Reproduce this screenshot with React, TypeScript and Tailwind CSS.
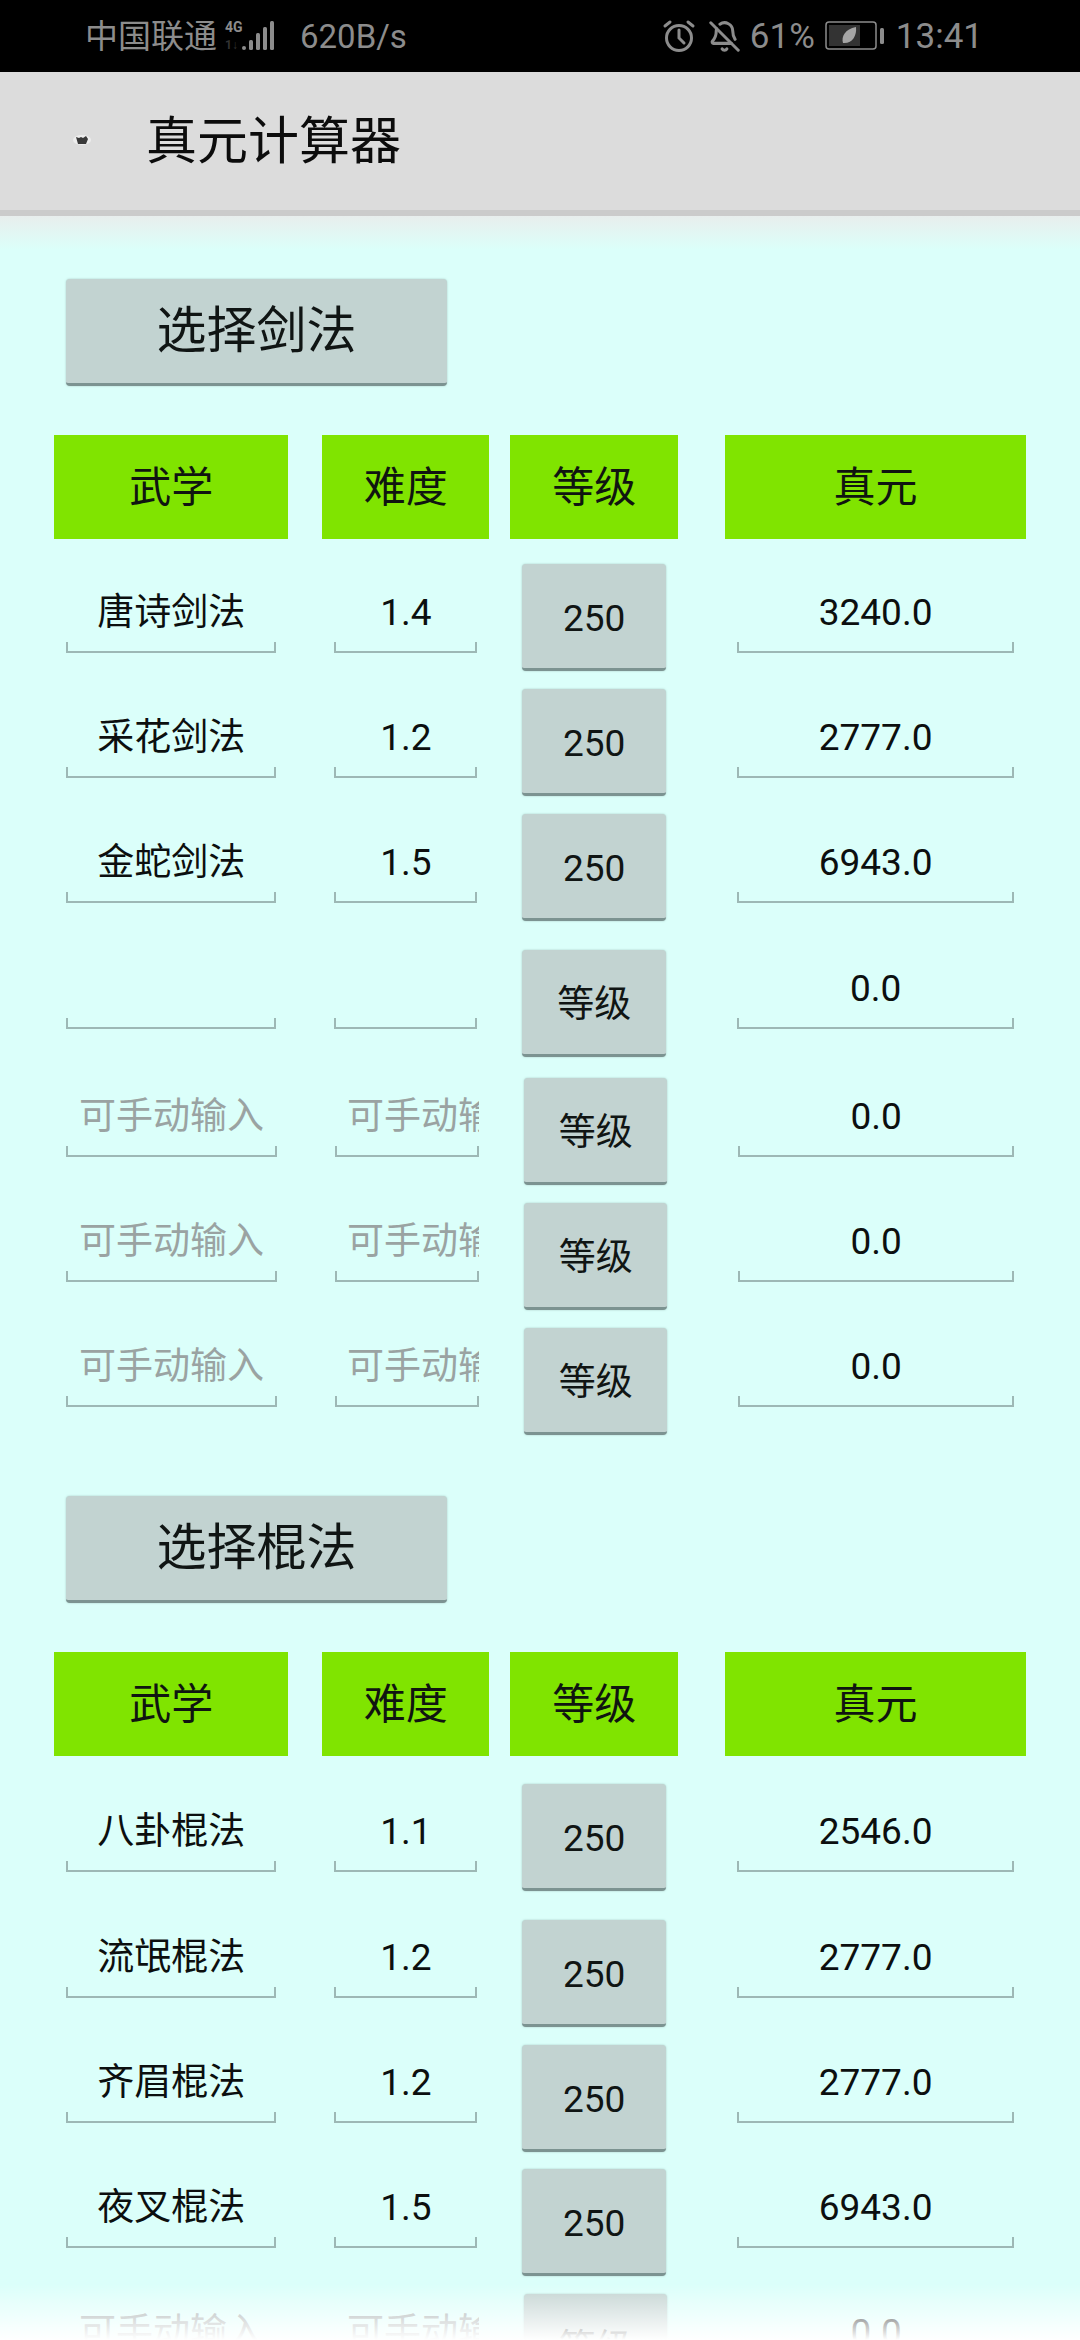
import React from "react";
import { BellOff } from "lucide-react";

const cjk = "font-['Roboto','Noto_Sans_CJK_SC',sans-serif]";

function Raised({ className, children }: { className: string; children: React.ReactNode }) {
  return (
    <div
      className={`flex items-center justify-center rounded-[4px] border-b-[3px] border-[#7c9391] bg-[#c2d3d1] text-[#101514] shadow-[0_0_2px_rgba(120,150,148,0.55)] ${className}`}
    >
      {children}
    </div>
  );
}

function Field({ value, placeholder, textClass }: { value?: string; placeholder?: string; textClass: string }) {
  return (
    <div className="flex h-[90px] flex-col">
      <div className={`flex-1 overflow-hidden whitespace-nowrap pt-[27px] text-center text-[37px] leading-[46px] ${textClass} ${placeholder ? "text-[#9aa3a2]" : "text-[#0c0f0f]"}`}>
        {value || placeholder || "\u00a0"}
      </div>
      <div className="h-[11px] border-x-2 border-b-2 border-[#9db8b5]" />
    </div>
  );
}

type RowData = { name?: string; nameHint?: boolean; diff?: string; level: string; value: string; rowClass: string; btnClass: string };

function Row({ name, nameHint, diff, level, value, rowClass, btnClass }: RowData) {
  return (
    <div className={`flex items-start ${rowClass}`}>
      <div className="w-[236px] px-3">
        <Field value={name} placeholder={nameHint ? "可手动输入" : undefined} textClass="px-[13px]" />
      </div>
      <div className="ml-[34px] w-[168px] px-3">
        <Field value={diff} placeholder={nameHint ? "可手动输入" : undefined} textClass="px-[12px]" />
      </div>
      <div className="ml-[21px] w-[169px] px-3">
        <Raised className={`h-[107px] w-full pt-[6px] text-[37px] leading-[46px] ${btnClass}`}>{level}</Raised>
      </div>
      <div className="ml-[47px] w-[303px] px-3">
        <Field value={value} textClass="" />
      </div>
    </div>
  );
}

function HeaderRow() {
  const cell = "flex h-[104px] items-center justify-center bg-[#80e400] text-[42px] text-[#101510]";
  return (
    <div className="mt-[49px] flex">
      <div className={`${cell} w-[236px]`}>武学</div>
      <div className={`${cell} ml-[34px] w-[168px]`}>难度</div>
      <div className={`${cell} ml-[21px] w-[169px]`}>等级</div>
      <div className={`${cell} ml-[47px] w-[303px]`}>真元</div>
    </div>
  );
}

const swordRows: RowData[] = [
  { name: "唐诗剑法", diff: "1.4", level: "250", value: "3240.0", rowClass: "mt-[24px] h-[125px]", btnClass: "mt-[1px]" },
  { name: "采花剑法", diff: "1.2", level: "250", value: "2777.0", rowClass: "h-[125px]", btnClass: "mt-[1px]" },
  { name: "金蛇剑法", diff: "1.5", level: "250", value: "6943.0", rowClass: "h-[126px]", btnClass: "mt-[1px]" },
  { level: "等级", value: "0.0", rowClass: "h-[128px]", btnClass: "mt-[11px]" },
  { nameHint: true, level: "等级", value: "0.0", rowClass: "h-[125px]", btnClass: "mt-[11px]" },
  { nameHint: true, level: "等级", value: "0.0", rowClass: "h-[125px]", btnClass: "mt-[11px]" },
  { nameHint: true, level: "等级", value: "0.0", rowClass: "h-[125px]", btnClass: "mt-[11px]" },
];

const staffRows: RowData[] = [
  { name: "八卦棍法", diff: "1.1", level: "250", value: "2546.0", rowClass: "mt-[26px] h-[126px]", btnClass: "mt-[2px]" },
  { name: "流氓棍法", diff: "1.2", level: "250", value: "2777.0", rowClass: "h-[125px]", btnClass: "mt-[12px]" },
  { name: "齐眉棍法", diff: "1.2", level: "250", value: "2777.0", rowClass: "h-[125px]", btnClass: "mt-[12px]" },
  { name: "夜叉棍法", diff: "1.5", level: "250", value: "6943.0", rowClass: "h-[125px]", btnClass: "mt-[11px]" },
  { nameHint: true, level: "等级", value: "0.0", rowClass: "h-[125px]", btnClass: "mt-[11px]" },
];

function StatusBar() {
  return (
    <div className="flex h-[72px] items-center justify-between bg-black pl-[85px] pr-[97px] font-['Roboto','Noto_Sans_CJK_SC',sans-serif] text-[#8c8c8c]">
      <div className="flex items-center">
        <span className="text-[33px] leading-none">中国联通</span>
        <svg width="60" height="36" viewBox="0 0 60 36" className="ml-[6px]">
          <text x="2" y="14" fontSize="14" fontWeight="700" fill="#8c8c8c" fontFamily="Roboto">4G</text>
          <text x="2" y="31" fontSize="12" fontWeight="700" fill="#333" fontFamily="Roboto">1↓</text>
          <rect x="19" y="28" width="4" height="4" rx="2" fill="#8c8c8c" />
          <rect x="26" y="22" width="4" height="10" rx="1.5" fill="#8c8c8c" />
          <rect x="33" y="15" width="4" height="17" rx="1.5" fill="#8c8c8c" />
          <rect x="40" y="9" width="4" height="23" rx="1.5" fill="#8c8c8c" />
          <rect x="47" y="3" width="4" height="29" rx="1.5" fill="#8c8c8c" />
        </svg>
        <span className="ml-[17px] text-[33px] leading-none">620B/s</span>
      </div>
      <div className="flex items-center">
        <svg width="34" height="34" viewBox="0 0 34 34" fill="none" stroke="#8c8c8c" strokeWidth="3" strokeLinecap="round">
          <circle cx="17" cy="19" r="12.5" />
          <path d="M17 11v8l5 5M3 7l5-4M31 7l-5-4" />
        </svg>
        <BellOff className="ml-[12px]" size={33} color="#8c8c8c" strokeWidth={2.2} />
        <span className="ml-[9px] text-[35px] leading-none">61%</span>
        <svg width="60" height="30" viewBox="0 0 60 30" className="ml-[10px]" fill="none">
          <rect x="1" y="1" width="50" height="27" rx="3" stroke="#8c8c8c" strokeWidth="1.5" />
          <rect x="4" y="4" width="31" height="21" fill="#333333" />
          <rect x="55" y="7" width="4" height="16" rx="1.5" fill="#8c8c8c" />
          <path d="M18 22c-2-6 2-14 13-16 1 9-4 17-13 16z" fill="#a5a5a5" />
        </svg>
        <span className="ml-[11px] text-[35px] leading-none">13:41</span>
      </div>
    </div>
  );
}

export default function App() {
  return (
    <div className={`relative h-[2340px] w-[1080px] overflow-hidden bg-[#dbfffa] ${cjk}`}>
      <StatusBar />
      <div className="flex h-[144px] items-center border-b-[6px] border-[#cbcbcb] bg-[#dcdcdc] pl-[72px]">
        <svg width="20" height="12" viewBox="0 0 20 12" className="mb-[2px]">
          <ellipse cx="10" cy="6" rx="9" ry="5" fill="#eeeeee" />
          <path d="M4 3l3 1 2-1 2 1 3-2 2 3-2 5H6z" fill="#3a3a3a" />
        </svg>
        <span className="ml-[54px] text-[51px] leading-none text-[#0c0c0c]">真元计算器</span>
      </div>
      <div className="h-[34px] bg-gradient-to-b from-[#e8eeed] to-[#dbfffa]" />

      <div className="px-[54px] pt-[29px]">
        <Raised className="ml-3 h-[107px] w-[381px] text-[50px]">选择剑法</Raised>
        <HeaderRow />
        {swordRows.map((r, i) => (
          <Row key={i} {...r} />
        ))}
        <div className="h-[54px]" />
        <Raised className="ml-3 h-[107px] w-[381px] text-[50px]">选择棍法</Raised>
        <HeaderRow />
        {staffRows.map((r, i) => (
          <Row key={i} {...r} />
        ))}
      </div>

      <div className="pointer-events-none absolute inset-x-0 bottom-0 h-[56px] bg-gradient-to-b from-white/0 to-white" />
    </div>
  );
}
